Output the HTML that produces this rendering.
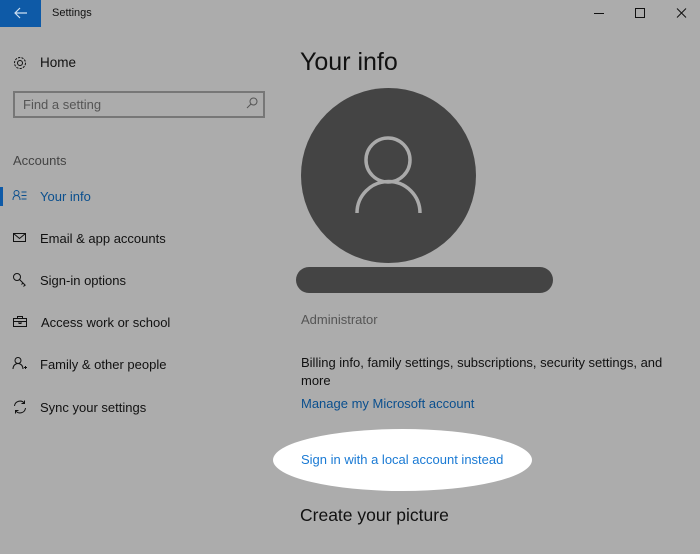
<!DOCTYPE html>
<html><head><style>
*{margin:0;padding:0;box-sizing:border-box}
body{width:700px;height:554px;background:#acacac;font-family:"Liberation Sans",sans-serif;position:relative;overflow:hidden;color:#111}
.a{position:absolute;white-space:nowrap}
.t{font-size:13px;line-height:16px}
.blue{color:#0a4f8e}
svg.i{position:absolute}
</style></head><body>
<div class="a" style="left:0;top:0;width:41px;height:27px;background:#0e5aa7"></div>
<svg class="i" style="left:13px;top:6px" width="16" height="14" viewBox="0 0 16 14"><path d="M14 7H2M7 2L2 7l5 5" stroke="#cfe0f2" stroke-width="1.2" fill="none"/></svg>
<div class="a" style="left:52px;top:7px;font-size:11px">Settings</div>
<svg class="i" style="left:590px;top:6px" width="100" height="14"><path d="M4 7.5h10" stroke="#111"/><rect x="45.5" y="2.5" width="9" height="9" stroke="#111" fill="none"/><path d="M87 2.5l9 9M96 2.5l-9 9" stroke="#111"/></svg>

<svg class="i" style="left:12px;top:55px" width="16" height="16" viewBox="0 0 16 16"><circle cx="8" cy="8" r="2.5" stroke="#111" fill="none"/><circle cx="8" cy="8" r="5.5" stroke="#111" fill="none" stroke-dasharray="2.2 1.2"/></svg>
<div class="a t" style="left:40px;top:55px;font-size:13.5px">Home</div>
<div class="a" style="left:13px;top:91px;width:252px;height:27px;border:2px solid #777"></div>
<div class="a t" style="left:23px;top:97px;color:#555">Find a setting</div>
<svg class="i" style="left:245px;top:96px" width="14" height="14"><circle cx="8.5" cy="5.5" r="3.5" stroke="#555" fill="none"/><path d="M6 8l-4 4" stroke="#555"/></svg>
<div class="a t" style="left:13px;top:153px;color:#444">Accounts</div>
<div class="a" style="left:0;top:187px;width:3px;height:19px;background:#0e5aa7"></div>
<svg class="i" style="left:12px;top:189px" width="16" height="14"><circle cx="4.5" cy="4" r="2.5" stroke="#0a4f8e" fill="none"/><path d="M1 11c0-3 1.5-4.5 3.5-4.5S8 8 8 11M9.5 3h5M9.5 6.5h5M9.5 10h5" stroke="#0a4f8e" fill="none"/></svg>
<div class="a t blue" style="left:40px;top:189px">Your info</div>
<svg class="i" style="left:12px;top:231px" width="16" height="14"><rect x="1.5" y="2.5" width="12" height="8" stroke="#111" fill="none"/><path d="M1.5 2.5l6 5 6-5" stroke="#111" fill="none"/></svg>
<div class="a t" style="left:40px;top:231px">Email &amp; app accounts</div>
<svg class="i" style="left:12px;top:272px" width="16" height="16"><circle cx="5" cy="5" r="3.5" stroke="#111" fill="none"/><path d="M7.5 7.5l6 6M11 11l-1.5 1.5M13 13l-1.5 1.5" stroke="#111" fill="none"/></svg>
<div class="a t" style="left:40px;top:273px">Sign-in options</div>
<svg class="i" style="left:12px;top:315px" width="16" height="14"><rect x="1.5" y="3.5" width="13" height="8" stroke="#111" fill="none"/><path d="M5.5 3.5v-2h5v2M1.5 6.5h13M7 6.5v2h2v-2" stroke="#111" fill="none"/></svg>
<div class="a t" style="left:41px;top:315px">Access work or school</div>
<svg class="i" style="left:12px;top:356px" width="16" height="16"><circle cx="6" cy="4.5" r="3" stroke="#111" fill="none"/><path d="M1 13c0-3 2-5.5 5-5.5s5 2.5 5 5.5M12 11.5h3M13.5 10v3" stroke="#111" fill="none"/></svg>
<div class="a t" style="left:40px;top:357px">Family &amp; other people</div>
<svg class="i" style="left:12px;top:399px" width="16" height="16"><path d="M2.5 7a5.5 5.5 0 0 1 10-2.5M13.5 9a5.5 5.5 0 0 1-10 2.5M12.5 1.5v3h-3M3.5 14.5v-3h3" stroke="#111" fill="none"/></svg>
<div class="a t" style="left:40px;top:400px">Sync your settings</div>

<div class="a" style="left:300px;top:48px;font-size:25px;font-weight:300">Your info</div>
<div class="a" style="left:301px;top:88px;width:175px;height:175px;border-radius:50%;background:#444"></div>
<svg class="i" style="left:350px;top:130px" width="80" height="90"><circle cx="38" cy="30" r="22" stroke="#aaa" stroke-width="3.5" fill="none"/><path d="M7 83a31 31 0 0 1 63 0" stroke="#aaa" stroke-width="3.5" fill="none"/></svg>
<div class="a" style="left:296px;top:267px;width:257px;height:26px;border-radius:13px;background:#444"></div>
<div class="a t" style="left:301px;top:312px;color:#555">Administrator</div>
<div class="a t" style="left:301px;top:354px;line-height:18px;white-space:normal;width:380px">Billing info, family settings, subscriptions, security settings, and more</div>
<div class="a t blue" style="left:301px;top:396px">Manage my Microsoft account</div>
<div class="a" style="left:273px;top:429px;width:259px;height:62px;border-radius:50%;background:#fff"></div>
<div class="a t" style="left:301px;top:452px;color:#1a7ad4">Sign in with a local account instead</div>
<div class="a" style="left:300px;top:505px;font-size:17.5px">Create your picture</div>
</body></html>
